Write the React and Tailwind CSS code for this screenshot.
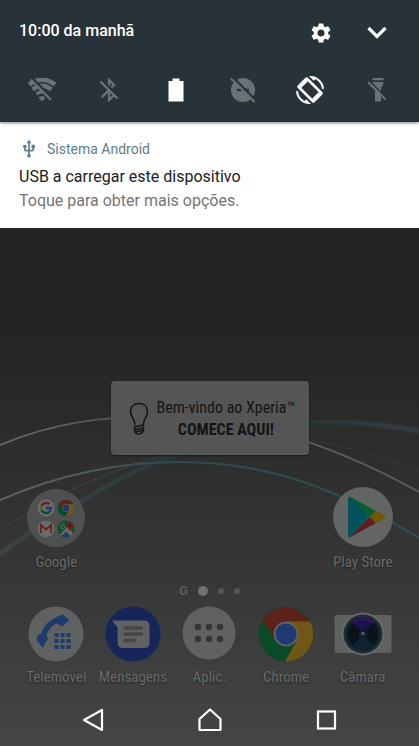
import React from "react";
import { MdBluetoothDisabled, MdSettings, MdUsb } from "react-icons/md";

function WifiOff() {
  return (
    <svg width="28" height="26" viewBox="0 0 28 26" aria-hidden="true">
      <mask id="wifi-gap">
        <rect width="28" height="26" fill="#fff" />
        <path d="M3.500 0.500 L26 23" stroke="#000" strokeWidth="2.400" />
      </mask>
      <g fill="none" stroke="#6b7276" mask="url(#wifi-gap)">
        <path d="M1 7.500 Q14 -2 27 7.500" strokeWidth="4.400" />
        <path d="M4.500 12.500 Q14 5 23.500 12.500" strokeWidth="4.400" />
        <path d="M8.500 17 Q14 12.500 19.500 17" strokeWidth="3.500" />
        <path d="M10.500 20.500 Q14 18 17.500 20.500 L14 24.500 Z" fill="#6b7276" stroke="none" />
      </g>
      <path d="M2.500 2.500 L23 23" stroke="#6b7276" strokeWidth="2.200" />
    </svg>
  );
}

function DoNotDisturbOff() {
  return (
    <svg width="26" height="26" viewBox="0 0 26 26" aria-hidden="true">
      <circle cx="13" cy="13" r="12" fill="#6b7276" />
      <path d="M7 13 H19" stroke="#283339" strokeWidth="2.400" />
      <path d="M3 0.500 L26 23.500" stroke="#283339" strokeWidth="2.400" />
      <path d="M1 1.500 L24.500 25" stroke="#6b7276" strokeWidth="2" />
    </svg>
  );
}

function ScreenRotation() {
  return (
    <svg width="28" height="28" viewBox="0 0 24 24" fill="#fff" aria-hidden="true">
      <path
        stroke="#fff"
        strokeWidth="0.300"
        d="M16.480 2.520c3.270 1.550 5.610 4.720 5.970 8.480h1.500C23.440 4.840 18.290 0 12 0l-.66.03 3.810 3.810 1.330-1.320zM7.520 21.480C4.250 19.940 1.910 16.760 1.550 13H.05C.56 19.160 5.710 24 12 24l.66-.03-3.810-3.810-1.330 1.320z"
      />
      <path
        stroke="#fff"
        strokeWidth="0.500"
        d="M10.230 1.750c-.59-.59-1.540-.59-2.120 0L1.750 8.110c-.59.59-.59 1.540 0 2.120l12.020 12.020c.59.59 1.540.59 2.120 0l6.360-6.360c.59-.59.59-1.540 0-2.120L10.230 1.750zM14.830 20.600L3.400 9.170l5.770-5.770 11.430 11.430-5.770 5.770z"
      />
      <path d="M9.170 3.400 L10.200 4.400 L4.400 10.200 L3.400 9.170 Z M20.600 14.830 L19.600 13.800 L13.800 19.600 L14.830 20.600 Z" />
    </svg>
  );
}

function FlashlightOff() {
  return (
    <svg width="20" height="26" viewBox="0 0 20 26" aria-hidden="true">
      <path d="M5.500 1 H16.500 V3.200 H5.500 Z M5.500 5 H16.500 V6.500 L14 11 V24.500 H8 V11 L5.500 6.500 Z" fill="#6b7276" />
      <path d="M2 3.500 L20 21.500" stroke="#283339" strokeWidth="1.600" />
      <path d="M1 5 L18.500 22.500" stroke="#6b7276" strokeWidth="2" />
    </svg>
  );
}

function Wallpaper() {
  return (
    <svg
      className="absolute inset-0 h-full w-full"
      viewBox="0 228 419 518"
      preserveAspectRatio="none"
      fill="none"
      aria-hidden="true"
    >
      <defs>
        <linearGradient id="arc-white">
          <stop offset="0" stopColor="#656666" />
          <stop offset="0.500" stopColor="#414343" />
          <stop offset="0.700" stopColor="#5b5c5c" />
          <stop offset="1" stopColor="#5b5c5c" />
        </linearGradient>
        <linearGradient id="arc-teal">
          <stop offset="0" stopColor="#606363" />
          <stop offset="0.200" stopColor="#515c60" />
          <stop offset="0.400" stopColor="#2f4a4b" />
          <stop offset="1" stopColor="#2f5152" />
        </linearGradient>
        <linearGradient id="arc-wide">
          <stop offset="0" stopColor="#3d4547" />
          <stop offset="0.400" stopColor="#2b383a" />
          <stop offset="0.700" stopColor="#2b3536" />
          <stop offset="1" stopColor="#323e41" />
        </linearGradient>
        <filter id="soft" x="-10%" y="-20%" width="120%" height="140%">
          <feGaussianBlur stdDeviation="1.300" />
        </filter>
      </defs>
      <path d="M-5 557 C80 497 200 422 325 422 Q375 422 424 432" stroke="url(#arc-wide)" strokeWidth="5" filter="url(#soft)" />
      <path d="M0 530 C60 492 130 458 210 446" stroke="#3a4343" strokeWidth="1" />
      <path d="M309 440 Q365 449 419 472" stroke="#323a3a" strokeWidth="1" />
      <path d="M0 445 C60 420 110 417 150 417 C240 417 320 437 419 492" stroke="url(#arc-white)" strokeWidth="2" />
      <path d="M0 500 C60 474 120 462 180 462 C270 462 340 490 419 538" stroke="url(#arc-teal)" strokeWidth="2" />
    </svg>
  );
}

function Bulb() {
  return (
    <svg width="20" height="34" viewBox="0 0 20 34" fill="none" stroke="#141414" strokeWidth="1.500" strokeLinejoin="round" strokeLinecap="round" aria-hidden="true">
      <path d="M6 22.500 C6 17 1.500 15 1.500 9.500 C1.500 4.500 5 1.500 10 1.500 C15 1.500 18.500 4.500 18.500 9.500 C18.500 15 14.500 17 14.500 22" />
      <path d="M5.500 25 L14.500 23 V26 L5.500 27.500 Z M5.500 27.500 C5.500 33.500 14.500 33.500 14.500 26.500 M7.500 29.500 L13 28.500" />
    </svg>
  );
}

function ChromeMark({ size }) {
  return (
    <svg width={size} height={size} viewBox="0 0 56 56" aria-hidden="true">
      <circle cx="28" cy="28" r="27.500" fill="#0b4a29" />
      <path d="M4.500 14 A27.500 27.500 0 0 1 51.600 15.500 L28 15.500 L16.500 33 Z" fill="#5d211c" />
      <path d="M52.200 15.500 A27.500 27.500 0 0 1 27 55.500 L39.500 33.500 L28 15.500 Z" fill="#705716" />
      <circle cx="28" cy="28" r="12.500" fill="#606161" />
      <circle cx="28" cy="28" r="10.500" fill="#1d3b72" />
    </svg>
  );
}

function GoogleFolder() {
  return (
    <svg width="58" height="58" viewBox="0 0 58 58" aria-hidden="true">
      <circle cx="29" cy="29" r="29" fill="#4f5050" />
      <circle cx="19" cy="19" r="8.500" fill="#696a6a" />
      <g fill="none" strokeWidth="2.400">
        <path d="M22.500 15.200 A5 5 0 0 0 14.600 16.700" stroke="#6a221d" />
        <path d="M14.600 16.700 A5 5 0 0 0 14.600 21.300" stroke="#705716" />
        <path d="M14.600 21.300 A5 5 0 0 0 22.200 22.900" stroke="#0b4a29" />
        <path d="M22.200 22.900 A5 5 0 0 0 24 19 H19" stroke="#1d3b72" />
      </g>
      <svg x="30.500" y="10.500" width="17" height="17">
        <ChromeMark size={17} />
      </svg>
      <circle cx="19" cy="40" r="8.500" fill="#696a6a" />
      <path d="M14 44 V36 L19 40.500 L24 36 V44" fill="none" stroke="#6a221d" strokeWidth="1.800" />
      <circle cx="39" cy="40" r="8.500" fill="#0f502c" />
      <path d="M32.500 46 L42 36 L46 45 L42 48 Z" fill="#6a6b6b" />
      <path d="M34.500 47 L39 42.500 L43.500 47 A8.500 8.500 0 0 1 34.500 47 Z" fill="#1d3b72" />
      <path d="M36 37 H38 A2.200 2.200 0 1 1 37 35.500" fill="none" stroke="#6a6b6b" strokeWidth="1" />
      <path d="M43 43 C42.500 40 39.500 39 39.500 36.500 A3.500 3.500 0 0 1 46.500 36.500 C46.500 39 43.500 40 43 43 Z" fill="#6a221d" />
      <circle cx="43" cy="36.500" r="1.200" fill="#3a100d" />
    </svg>
  );
}

function PlayStore() {
  return (
    <svg width="60" height="60" viewBox="0 0 60 60" aria-hidden="true">
      <circle cx="30" cy="30" r="30" fill="#636464" />
      <path d="M15 11.500 Q15 9 17.500 10 L37 30 L17.500 50 Q15 51 15 48.500 Z" fill="#03525c" />
      <path d="M16.500 9.500 L43 24 L37 30 Z" fill="#07602f" />
      <path d="M16.500 50.500 L43 36 L37 30 Z" fill="#641a20" />
      <path d="M43 24 L51.500 28.500 Q53.500 30 51.500 31.500 L43 36 L37 30 Z" fill="#705700" />
    </svg>
  );
}

function Phone() {
  return (
    <svg width="56" height="56" viewBox="0 0 56 56" aria-hidden="true">
      <circle cx="28" cy="28" r="27.500" fill="#606161" />
      <path
        d="M35 8.500 L41.500 14.500 L34 20.500 L29 17.500 Q21 21 18.500 29.500 L20 33 L14.500 41.500 L8.500 34 L10 29 L13 27.500 Q18 14.500 30 10.500 Z"
        fill="#1d3b6c"
      />
      <path d="M26.500 27 h4 v4 h-4z m6 0 h4 v4 h-4z m6 0 h4 v4 h-4z m-12 6 h4 v4 h-4z m6 0 h4 v4 h-4z m6 0 h4 v4 h-4z m-12 6 h4 v4 h-4z m6 0 h4 v4 h-4z m6 0 h4 v4 h-4z" fill="#1d3b6c" />
    </svg>
  );
}

function Messages() {
  return (
    <svg width="56" height="56" viewBox="0 0 56 56" aria-hidden="true">
      <circle cx="28" cy="28" r="27.500" fill="#16265a" />
      <path d="M7 14.500 H39 Q44.500 14.500 44.500 20 V36.500 Q44.500 42 39 42 H18 Q12.500 42 12.500 36.500 V21.500 Z" fill="#606161" />
      <path d="M20 22 H36.500 M20 28 H36.500 M20 34.500 H29" stroke="#454646" strokeWidth="3.600" strokeLinecap="round" />
    </svg>
  );
}

function AppDrawer() {
  return (
    <svg width="56" height="56" viewBox="0 0 56 56" aria-hidden="true">
      <circle cx="28" cy="27" r="26.500" fill="#606161" />
      <g fill="#343535">
        <circle cx="17" cy="21" r="3.200" />
        <circle cx="28" cy="21" r="3.200" />
        <circle cx="39" cy="21" r="3.200" />
        <circle cx="17" cy="33" r="3.200" />
        <circle cx="28" cy="33" r="3.200" />
        <circle cx="39" cy="33" r="3.200" />
      </g>
    </svg>
  );
}

function Camera() {
  return (
    <svg width="58" height="56" viewBox="0 0 58 56" aria-hidden="true">
      <defs>
        <radialGradient id="lens">
          <stop offset="0" stopColor="#17323f" />
          <stop offset="0.350" stopColor="#080c12" />
          <stop offset="0.850" stopColor="#0c1620" />
          <stop offset="1" stopColor="#182a34" />
        </radialGradient>
      </defs>
      <rect x="0.500" y="9" width="57" height="38" rx="1.500" fill="#5f6060" />
      <circle cx="29" cy="28" r="21.500" fill="#686969" />
      <circle cx="29" cy="28" r="19.500" fill="#1c2d35" />
      <circle cx="29" cy="28" r="17.500" fill="url(#lens)" />
      <path d="M29 28 L17.500 15.500 Q29 7 40.500 15.500 Z" fill="#17134a" />
      <path d="M17.500 15.500 Q29 6.500 40.500 15.500 L38 18 Q29 11 20 18 Z" fill="#2e1257" />
      <path d="M29 28 L18 40 Q29 49 40 40 Z" fill="#11222f" />
      <circle cx="29" cy="28" r="8" fill="none" stroke="#152833" strokeWidth="0.600" />
      <circle cx="29" cy="27.500" r="1.400" fill="#4b6e78" />
    </svg>
  );
}

const condensed = "font-['Roboto_Condensed','Liberation_Sans_Narrow',Roboto,sans-serif]";

function AppIcon({ label, children }) {
  return (
    <button type="button" className="flex min-w-0 flex-col items-center justify-end gap-[3px]">
      {children}
      <span className={`${condensed} text-[15px] leading-6 whitespace-nowrap text-[#696a6a] [text-shadow:0_1px_2px_#222]`}>
        {label}
      </span>
    </button>
  );
}

export default function App() {
  return (
    <div className="flex min-h-screen flex-col bg-[#232524] font-[Roboto,sans-serif]">
      <header className="relative z-10 bg-[#283339] shadow-[0_1px_3px_rgba(0,0,0,0.5)]">
        <div className="flex items-center pt-[13px] pr-7 pl-[19px]">
          <time className="flex-1 text-base leading-9 font-medium text-white">10:00 da manhã</time>
          <div className="flex items-center gap-[30px] pt-1">
            <button type="button" aria-label="Definições" className="text-white">
              <MdSettings size={24} />
            </button>
            <button type="button" aria-label="Expandir" className="text-white">
              <svg width="28" height="24" viewBox="0 0 28 24" fill="none" aria-hidden="true">
                <path d="M5.500 7 L14 15.500 L22.500 7" stroke="#fff" strokeWidth="3.200" />
              </svg>
            </button>
          </div>
        </div>
        <div className="grid h-[73px] grid-cols-6 px-2 pt-2 text-[#6b7276]">
          <button type="button" aria-label="Wi-Fi" className="flex items-center justify-center"><WifiOff /></button>
          <button type="button" aria-label="Bluetooth" className="flex items-center justify-center"><MdBluetoothDisabled size={28} /></button>
          <button type="button" aria-label="Bateria" className="flex items-center justify-center">
            <svg width="16" height="24" viewBox="0 0 16 24" aria-hidden="true">
              <path d="M0.500 3 H4.500 V0.500 H11.500 V3 H15.500 V23.500 H0.500 Z" fill="#fff" />
            </svg>
          </button>
          <button type="button" aria-label="Não incomodar" className="flex items-center justify-center"><DoNotDisturbOff /></button>
          <button type="button" aria-label="Rotação automática" className="flex items-center justify-center"><ScreenRotation /></button>
          <button type="button" aria-label="Lanterna" className="flex items-center justify-center"><FlashlightOff /></button>
        </div>
      </header>

      <article className="bg-white px-[19px] pt-[15px] pb-4">
        <div className="flex h-6 items-center gap-2 text-sm text-[#607d8b]">
          <MdUsb size={20} />
          <span>Sistema Android</span>
        </div>
        <h1 className="mt-1 text-base leading-6 text-[#212121]">USB a carregar este dispositivo</h1>
        <p className="text-base leading-[23px] text-[#757575]">Toque para obter mais opções.</p>
      </article>

      <main className="relative flex flex-1 flex-col justify-end bg-linear-to-b from-[#232524] from-20% to-[#444544]">
        <Wallpaper />
        <div className="relative flex flex-col">
          <button type="button" className="flex h-[74px] w-[198px] items-center gap-2 self-center rounded bg-[#545555] pt-0.5 pl-[18px] text-[#141414] shadow-[0_1px_2px_#1a1a1a]">
            <Bulb />
            <span className={`${condensed} flex flex-col items-center text-base leading-[22px] whitespace-nowrap`}>
              <span>Bem-vindo ao Xperia™</span>
              <strong className="font-bold">COMECE AQUI!</strong>
            </span>
          </button>

          <section className="mt-8 grid grid-cols-5 px-[18px]">
            <AppIcon label="Google"><GoogleFolder /></AppIcon>
            <div className="col-span-3" />
            <AppIcon label="Play Store"><PlayStore /></AppIcon>
          </section>

          <div className="mt-[9px] flex h-4 items-center justify-center gap-[10px]">
            <span className="text-[13px] font-bold text-[#5a5b5b]">G</span>
            <span className="size-[10px] rounded-full bg-[#717272]" />
            <span className="size-[6px] rounded-full bg-[#555656]" />
            <span className="size-[6px] rounded-full bg-[#555656]" />
          </div>

          <section className="mt-[7px] grid grid-cols-5 px-[18px]">
            <AppIcon label="Telemóvel"><Phone /></AppIcon>
            <AppIcon label="Mensagens"><Messages /></AppIcon>
            <AppIcon label="Aplic."><AppDrawer /></AppIcon>
            <AppIcon label="Chrome"><ChromeMark size={56} /></AppIcon>
            <AppIcon label="Câmara"><Camera /></AppIcon>
          </section>

          <nav className="mt-[5px] flex h-[52px] items-center justify-center gap-[92px]">
            <button type="button" aria-label="Voltar">
              <svg width="24" height="26" viewBox="0 0 24 26" fill="none" aria-hidden="true">
                <path d="M21 3 V23 L3 13 Z" stroke="#fff" strokeWidth="2.200" strokeLinejoin="round" />
              </svg>
            </button>
            <button type="button" aria-label="Início">
              <svg width="26" height="26" viewBox="0 0 26 26" fill="none" aria-hidden="true">
                <path d="M2.500 12 L13 2.500 L23.500 12 V23 H2.500 Z" stroke="#fff" strokeWidth="2.200" strokeLinejoin="round" />
              </svg>
            </button>
            <button type="button" aria-label="Recentes">
              <svg width="24" height="26" viewBox="0 0 24 26" fill="none" aria-hidden="true">
                <rect x="3" y="4.500" width="17" height="17" stroke="#fff" strokeWidth="2.200" />
              </svg>
            </button>
          </nav>
        </div>
      </main>
    </div>
  );
}
